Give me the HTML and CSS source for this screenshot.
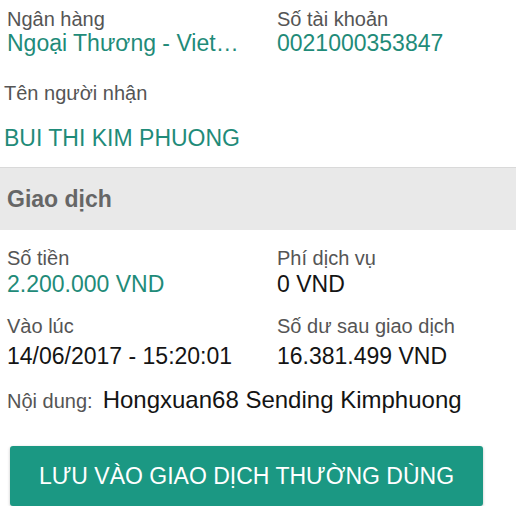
FILE: index.html
```html
<!DOCTYPE html>
<html lang="vi">
<head>
<meta charset="utf-8">
<title>Giao dịch</title>
<link rel="stylesheet" href="styles.css">
</head>
<body>
<div class="screen">
  <section class="recipient">
    <div class="pair-grid top-grid">
      <div class="field">
        <div class="label">Ngân hàng</div>
        <div class="value teal">Ngoại Thương - Viet…</div>
      </div>
      <div class="field">
        <div class="label">Số tài khoản</div>
        <div class="value teal">0021000353847</div>
      </div>
    </div>
    <div class="name-block">
      <div class="label">Tên người nhận</div>
      <div class="value teal name">BUI THI KIM PHUONG</div>
    </div>
  </section>

  <header class="band">
    <h2 class="band-title">Giao dịch</h2>
  </header>

  <section class="details">
    <div class="pair-grid row-one">
      <div class="field">
        <div class="label">Số tiền</div>
        <div class="value teal">2.200.000 VND</div>
      </div>
      <div class="field">
        <div class="label">Phí dịch vụ</div>
        <div class="value">0 VND</div>
      </div>
    </div>
    <div class="pair-grid row-two">
      <div class="field">
        <div class="label">Vào lúc</div>
        <div class="value">14/06/2017 - 15:20:01</div>
      </div>
      <div class="field">
        <div class="label">Số dư sau giao dịch</div>
        <div class="value">16.381.499 VND</div>
      </div>
    </div>
    <div class="note">
      <span class="label">Nội dung:</span>
      <span class="note-text">Hongxuan68 Sending Kimphuong</span>
    </div>
  </section>

  <div class="actions">
    <button class="save-btn" type="button">LƯU VÀO GIAO DỊCH THƯỜNG DÙNG</button>
  </div>
</div>
</body>
</html>
```

FILE: styles.css
```css
* {
  box-sizing: border-box;
}

html, body {
  margin: 0;
  padding: 0;
  background: #ffffff;
}

body {
  font-family: "Liberation Sans", Arial, sans-serif;
  color: #111111;
}

.screen {
  width: 516px;
}

.label {
  font-size: 20px;
  line-height: 22px;
  color: #555555;
  white-space: nowrap;
}

.value {
  font-size: 23px;
  line-height: 26px;
  color: #141414;
  white-space: nowrap;
}

.teal {
  color: #1f8b79;
}

.pair-grid {
  display: grid;
  grid-template-columns: 270px 1fr;
  padding-left: 7px;
}

.recipient {
  padding-top: 8px;
  padding-bottom: 16px;
}

.name-block {
  padding-left: 4px;
  margin-top: 26px;
}

.name-block .name {
  margin-top: 21px;
}

.band {
  background: #e9e9e9;
  border-top: 1px solid #d9d9d9;
  padding: 18px 7px 18px;
}

.band-title {
  margin: 0;
  font-size: 23px;
  line-height: 26px;
  font-weight: bold;
  color: #666666;
}

.details {
  padding-top: 17px;
}

.row-one .value {
  margin-top: 2px;
}

.row-two {
  margin-top: 18px;
}

.row-two .value {
  margin-top: 6px;
}

.note {
  display: flex;
  align-items: baseline;
  gap: 10px;
  padding-left: 7px;
  margin-top: 17px;
  line-height: 28px;
}

.note-text {
  font-size: 24px;
  color: #141414;
  white-space: nowrap;
}

.actions {
  padding: 32px 0 0 10px;
}

.save-btn {
  display: block;
  width: 473px;
  height: 60px;
  border: none;
  border-radius: 3px;
  background: #1b9883;
  color: #ffffff;
  font-family: "Liberation Sans", Arial, sans-serif;
  font-size: 23px;
  box-shadow: 0 1px 3px rgba(0, 0, 0, 0.25);
  padding: 0;
  cursor: pointer;
}
```
